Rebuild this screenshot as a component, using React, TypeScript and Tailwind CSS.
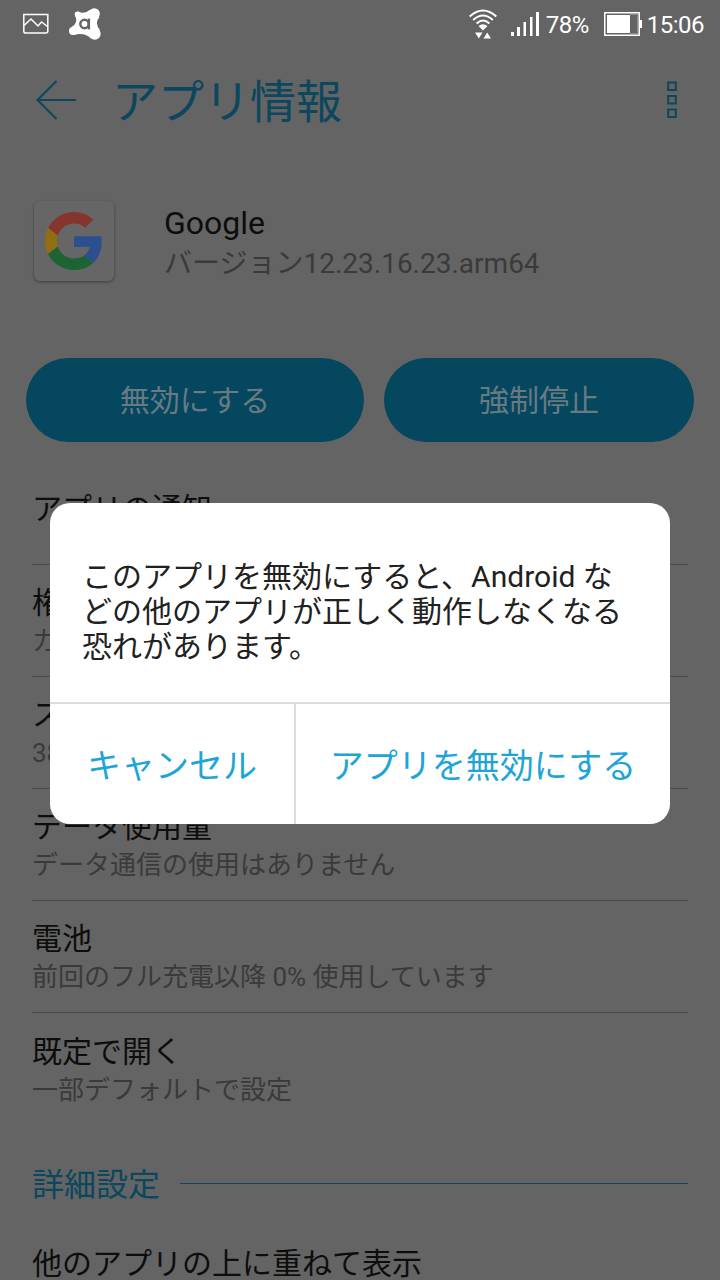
// AppInfo screen with the "disable app" confirmation dialog

const settings = [
  { title: 'アプリの通知', detail: '' },
  { title: '権限', detail: 'カメラ' },
  { title: 'ストレージ', detail: '383 MB' },
  { title: 'データ使用量', detail: 'データ通信の使用はありません' },
  { title: '電池', detail: '前回のフル充電以降 0% 使用しています' },
  { title: '既定で開く', detail: '一部デフォルトで設定' },
];

function StatusBar() {
  return (
    <div className="flex h-12 items-center justify-between pl-[22px] pr-4 text-white">
      <div className="flex items-center gap-[19px]">
        <svg width="27" height="22" viewBox="0 0 27 22" fill="none" stroke="white" strokeWidth="1.5">
          <path d="M1.800 1.500h24v16.700a1.800 1.800 0 0 1-1.800 1.800H3.600a1.800 1.800 0 0 1-1.800-1.800z" />
          <path d="M2 12.500l7-6.500 7 7 3.500-4 6 4.500" />
        </svg>
        <svg width="34" height="34" viewBox="0 0 34 34" fill="white">
          <path d="M10 4.500Q17 7.500 21.500 3L31.500 10Q26 16 32 23L23 31.500Q16 25 6 28L3 20.500Q11 16 7 8.500Z" />
          <circle cx="9.500" cy="7.200" r="2.800" />
          <circle cx="26.200" cy="6.800" r="5.600" />
          <circle cx="26.800" cy="26.800" r="5.900" />
          <circle cx="5" cy="24" r="4" />
          <circle cx="16.500" cy="17" r="4.200" fill="none" stroke="#646464" strokeWidth="2.400" />
          <path d="M20.900 11.600v10.800" stroke="#646464" strokeWidth="2.400" />
        </svg>
      </div>
      <div className="flex items-center">
        <svg width="28" height="30" viewBox="0 0 28 30" className="mr-3.5" fill="none" stroke="white" strokeWidth="2">
          <path d="M.7 7.500Q14-4.500 27.300 7.500M4.200 11Q14 2 23.800 11M7.600 14.500Q14 8.500 20.400 14.500" />
          <path d="M9.500 17q4.500-3.500 9 0L14 21.500z" fill="white" stroke="none" />
          <path d="M6 23.500h7.500l-3.700 6zM14.500 29.500H22L18.200 23.500z" fill="white" stroke="none" />
        </svg>
        <svg width="28" height="24" viewBox="0 0 28 24" className="mr-[7px]" fill="white">
          <path d="M0 20h3v4H0zM6 15h3v9H6zM12.500 10H15v14h-2.500zM19 5h2.500v19H19zM25 0h3v24h-3z" />
        </svg>
        <span className="mt-[2px] w-[58px] text-2xl tracking-[-0.5px]">78%</span>
        <svg width="38" height="24" viewBox="0 0 38 24" className="mr-[5px]">
          <path d="M.75.75h34.500v22.500H.75z" fill="none" stroke="white" strokeWidth="1.500" />
          <path d="M3 3h23v18H3zM35 8h3v8h-3z" fill="white" />
          <path d="M26 2.500h7.500v19H26" fill="none" stroke="#8a8a8a" />
        </svg>
        <span className="mt-[2px] text-2xl tracking-[-0.5px]">15:06</span>
      </div>
    </div>
  );
}

function Header() {
  return (
    <header className="flex h-[104px] items-center pl-9 pr-[43px] text-[#0b475e]">
      <svg width="41" height="40" viewBox="0 0 41 40" fill="none" stroke="currentColor" strokeWidth="2">
        <path d="M40 20H1.500M20.500 1L1.500 20l19 19" />
      </svg>
      <h1 className="ml-[35px] flex-1 pt-[3px] text-[46px] leading-none">アプリ情報</h1>
      <svg width="10" height="38" viewBox="0 0 10 38" fill="none" stroke="currentColor" strokeWidth="2">
        <path d="M1.200 1.500h7.600v7.600H1.200zM1.200 15h7.600v7.600H1.200zM1.200 28.500h7.600v7.600H1.200z" />
      </svg>
    </header>
  );
}

function GoogleIcon() {
  return (
    <div className="flex size-20 items-center justify-center rounded-md bg-[#666666] shadow-[0_1px_3px_rgba(0,0,0,0.4)]">
      <svg width="58" height="58" viewBox="0 0 48 48">
        <path fill="#85342e" d="M24 9.500c3.540 0 6.710 1.220 9.210 3.600l6.850-6.850C35.900 2.380 30.470 0 24 0 14.620 0 6.510 5.380 2.560 13.220l7.980 6.190C12.430 13.720 17.740 9.500 24 9.500z" />
        <path fill="#2c4f90" d="M46.980 24.550c0-1.570-.15-3.090-.38-4.550H24v9.020h12.940c-.58 2.960-2.260 5.480-4.780 7.180l7.730 6c4.510-4.180 7.090-10.360 7.090-17.650z" />
        <path fill="#926e10" d="M10.530 28.590c-.48-1.450-.76-2.990-.76-4.590s.27-3.140.76-4.590l-7.980-6.190C.92 16.460 0 20.120 0 24c0 3.880.92 7.540 2.560 10.780l7.970-6.190z" />
        <path fill="#1e6334" d="M24 48c6.480 0 11.930-2.130 15.890-5.810l-7.730-6c-2.150 1.450-4.920 2.300-8.160 2.300-6.260 0-11.570-4.220-13.470-9.910l-7.980 6.190C6.510 42.620 14.620 48 24 48z" />
      </svg>
    </div>
  );
}

function ConfirmDialog() {
  return (
    <div className="absolute left-[50px] top-[503px] flex h-[321px] w-[620px] flex-col overflow-hidden rounded-[20px] bg-white">
      <p className="flex-1 pl-8 pt-[56px] text-[30px] leading-[35px] text-[#212121]">
        このアプリを無効にすると、Android な
        <br />
        どの他のアプリが正しく動作しなくなる
        <br />
        恐れがあります。
      </p>
      <div className="flex h-[122px] border-t-2 border-[#dcdcdc] text-[34px] text-[#1ea5d8]">
        <button className="w-[246px] border-r-2 border-[#dcdcdc] pt-1">キャンセル</button>
        <button className="flex-1 pt-1">アプリを無効にする</button>
      </div>
    </div>
  );
}

export default function App() {
  return (
    <div className="relative h-[1280px] w-[720px] overflow-hidden whitespace-nowrap bg-[#646464] font-[Roboto,'Noto_Sans_CJK_JP',sans-serif] text-[#0d0d0d]">
      <StatusBar />
      <Header />

      <section className="flex gap-[50px] pl-[34px] pt-[49px]">
        <GoogleIcon />
        <div>
          <div className="text-[32px] leading-[44px]">Google</div>
          <div className="pt-px text-[28px] leading-[36px] text-[#3a3a3a]">バージョン12.23.16.23.arm64</div>
        </div>
      </section>

      <div className="mt-[76px] flex gap-5 px-[26px] text-[30px] text-[#687a82]">
        <button className="h-[84px] w-[338px] rounded-full bg-[#04475e] pt-px">無効にする</button>
        <button className="h-[84px] flex-1 rounded-full bg-[#04475e] pt-px">強制停止</button>
      </div>

      <ul className="mx-8 mt-[11px]">
        {settings.map((item) => (
          <li key={item.title} className="flex h-28 flex-col justify-center border-b border-[#4b4b4b] pt-px last:border-b-0">
            <div className="text-[30px] leading-[40px]">{item.title}</div>
            {item.detail && <div className="text-[26px] leading-[36px] text-[#3a3a3a]">{item.detail}</div>}
          </li>
        ))}
      </ul>

      <div className="mx-8 flex h-[116px] items-center gap-5 text-[32px] text-[#0b475e]">
        <h2 className="pt-[3px]">詳細設定</h2>
        <div className="h-px flex-1 bg-[#0b475e]" />
      </div>
      <div className="mx-8 pt-[3px] text-[30px] leading-[40px]">他のアプリの上に重ねて表示</div>

      <ConfirmDialog />
    </div>
  );
}
